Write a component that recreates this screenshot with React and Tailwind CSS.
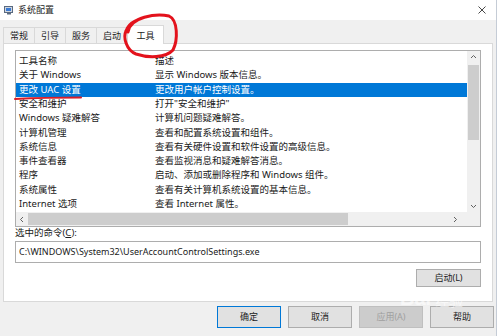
import React from 'react';

const FONT = '"Noto Sans", "Noto Sans CJK SC", sans-serif';

const tools = [
  ['关于 Windows', '显示 Windows 版本信息。'],
  ['更改 UAC 设置', '更改用户帐户控制设置。'],
  ['安全和维护', '打开"安全和维护"'],
  ['Windows 疑难解答', '计算机问题疑难解答。'],
  ['计算机管理', '查看和配置系统设置和组件。'],
  ['系统信息', '查看有关硬件设置和软件设置的高级信息。'],
  ['事件查看器', '查看监视消息和疑难解答消息。'],
  ['程序', '启动、添加或删除程序和 Windows 组件。'],
  ['系统属性', '查看有关计算机系统设置的基本信息。'],
  ['Internet 选项', '查看 Internet 属性。'],
  ['Internet 协议配置', '查看和配置网络地址设置。'],
];

const tabs = ['常规', '引导', '服务', '启动'];

function Row({ name, desc, selected }) {
  return (
    <div
      className={
        'flex h-[14.3px] items-center whitespace-nowrap ' +
        (selected ? 'bg-[#0078d7] text-white' : 'text-[#1a1a1a]')
      }
    >
      <span className="w-[139px] shrink-0 pl-[3px]">{name}</span>
      <span>{desc}</span>
    </div>
  );
}

function Button({ children, primary, disabled }) {
  return (
    <div
      className={
        'flex h-[22px] w-[64px] items-center justify-center border text-[9px] ' +
        (primary
          ? 'border-[#0078d7] bg-[#e1e1e1] text-[#222]'
          : disabled
          ? 'border-[#bfbfbf] bg-[#cccccc] text-[#a0a0a0]'
          : 'border-[#adadad] bg-[#e1e1e1] text-[#222]')
      }
    >
      {children}
    </div>
  );
}

export default function App() {
  return (
    <div
      className="relative flex h-[336px] w-[500px] overflow-hidden bg-white"
      style={{ fontFamily: FONT }}
    >
      <div className="flex h-full w-[497px] flex-col border-r border-[#c5ccd6] bg-[#f0f0f0]">
        {/* title bar */}
        <div className="flex h-[20px] shrink-0 items-center bg-white pl-[4px] pr-[10px]">
          <svg width="10" height="9" viewBox="0 0 10 9">
            <rect x="0.5" y="0.5" width="8" height="6" fill="#cfd6e0" stroke="#5a6a80" />
            <rect x="2" y="2" width="5" height="3" fill="#3a7bd5" />
            <rect x="3" y="7" width="4" height="1.5" fill="#5a6a80" />
          </svg>
          <span className="ml-[4px] text-[9px] text-[#222]">系统配置</span>
          <div className="flex-1" />
          <svg width="8" height="8" viewBox="0 0 8 8">
            <path d="M0.5 0.5 L7.5 7.5 M7.5 0.5 L0.5 7.5" stroke="#333" strokeWidth="0.9" />
          </svg>
        </div>

        {/* tabs */}
        <div className="flex h-[23px] shrink-0 items-end pl-[3px]">
          {tabs.map((t) => (
            <div
              key={t}
              className="flex h-[16px] w-[31px] items-center justify-center border-t border-l border-[#d9d9d9] bg-[#f0f0f0] text-[9px] text-[#222]"
            >
              {t}
            </div>
          ))}
          <div className="relative -mb-px flex h-[19px] w-[37px] items-start justify-center border-x border-t border-[#d9d9d9] bg-white pt-[3px] text-[9px] text-[#222]">
            工具
          </div>
        </div>

        {/* panel */}
        <div className="mx-[3px] flex h-[259px] shrink-0 flex-col border border-[#d9d9d9] bg-white px-[11px] pt-[6px]">
          {/* list box */}
          <div className="relative h-[177px] shrink-0 overflow-hidden border border-[#adadad] text-[9.5px]">
            <div className="pt-[3px] pr-[13px]">
              <div className="flex h-[14.3px] items-center whitespace-nowrap text-[#1a1a1a]">
                <span className="w-[139px] shrink-0 pl-[3px]">工具名称</span>
                <span>描述</span>
              </div>
              {tools.map(([n, d], i) => (
                <Row key={n} name={n} desc={d} selected={i === 1} />
              ))}
            </div>
            {/* vertical scrollbar */}
            <div className="absolute top-0 right-0 bottom-[14px] flex w-[13px] flex-col items-center bg-[#f0f0f0]">
              <svg width="7" height="12" viewBox="0 0 7 12" className="shrink-0">
                <path d="M1 7 L3.5 4.5 L6 7" stroke="#606060" strokeWidth="1" fill="none" />
              </svg>
              <div className="mt-[2px] h-[75px] w-[11px] bg-[#cdcdcd]" />
              <div className="flex-1" />
              <svg width="7" height="12" viewBox="0 0 7 12" className="shrink-0">
                <path d="M1 5 L3.5 7.5 L6 5" stroke="#606060" strokeWidth="1" fill="none" />
              </svg>
            </div>
            {/* horizontal scrollbar */}
            <div className="absolute right-0 bottom-0 left-0 flex h-[14px] items-center bg-[#f0f0f0]">
              <svg width="12" height="7" viewBox="0 0 12 7" className="shrink-0">
                <path d="M7 1 L4.5 3.5 L7 6" stroke="#606060" strokeWidth="1" fill="none" />
              </svg>
              <div className="h-[12px] w-[320px] bg-[#cdcdcd]" />
              <div className="flex-1" />
              <svg width="12" height="7" viewBox="0 0 12 7" className="mr-[19px] shrink-0">
                <path d="M5 1 L7.5 3.5 L5 6" stroke="#606060" strokeWidth="1" fill="none" />
              </svg>
            </div>
          </div>

          <div className="mt-[-1px] h-[15px] text-[9.5px] text-[#1a1a1a]">
            选中的命令(<span className="underline">C</span>):
          </div>
          <div className="flex h-[22px] shrink-0 items-center border border-[#adadad] pl-[3px] text-[9px] whitespace-nowrap text-[#1a1a1a]">
            C:\WINDOWS\System32\UserAccountControlSettings.exe
          </div>
          <div className="mt-[6px] flex justify-end">
            <div className="flex h-[18px] w-[65px] items-center justify-center border border-[#adadad] bg-[#e1e1e1] text-[9px] text-[#222]">
              启动(L)
            </div>
          </div>
        </div>

        {/* bottom buttons */}
        <div className="flex flex-1 items-start justify-end gap-[7px] pt-[4px] pr-[2px]">
          <Button primary>确定</Button>
          <Button>取消</Button>
          <Button disabled>应用(A)</Button>
          <Button>帮助</Button>
        </div>
      </div>

      {/* red annotation circle */}
      <svg className="pointer-events-none absolute top-[10px] left-[118px]" width="64" height="52" viewBox="0 0 64 52">
        <path
          d="M10 22 C12 7, 38 3, 51 6 C60 10, 60 30, 55 40 C48 48, 30 48, 18 44 C8 40, 5 27, 8 21 C10 15, 13 13, 17 11"
          stroke="#e3121c"
          strokeWidth="3"
          fill="none"
          strokeLinecap="round"
        />
      </svg>
      {/* red underline */}
      <svg className="pointer-events-none absolute top-[95px] left-[14px]" width="70" height="6" viewBox="0 0 70 6">
        <path d="M1 4 Q30 2.5 67 2.5" stroke="#d81e28" strokeWidth="2" fill="none" strokeLinecap="round" />
      </svg>

      {/* watermark */}
      <div className="pointer-events-none absolute top-[288px] left-[400px] flex items-end gap-[4px] text-white/60">
        <span className="text-[20px] leading-none font-bold" style={{ fontFamily: '"Liberation Sans", sans-serif' }}>
          Bai
        </span>
        <span className="text-[14px] leading-none">经验</span>
      </div>
    </div>
  );
}
